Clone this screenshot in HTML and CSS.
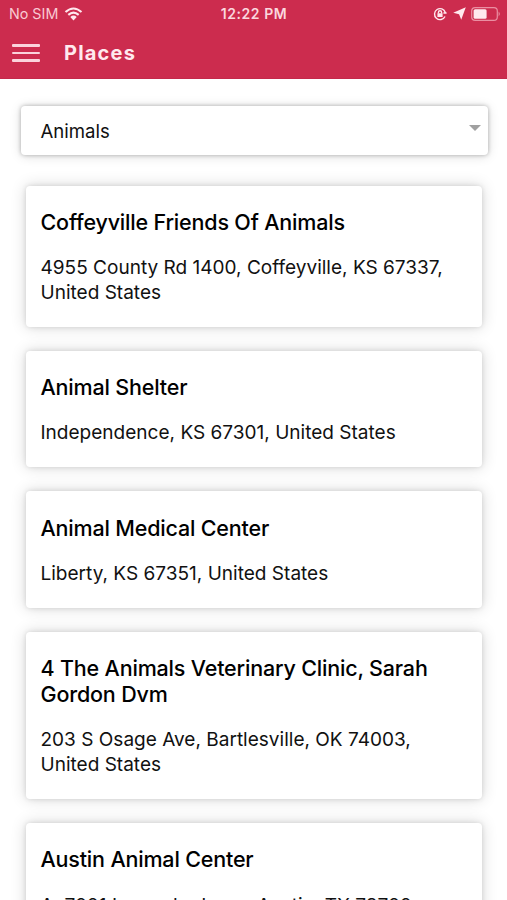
FILE: index.html
```html
<!DOCTYPE html>
<html lang="en">

<head>
    <meta charset="utf-8">
    <title>Places</title>
    <link rel="stylesheet" href="styles.css">
</head>

<body>
    <header class="header">
        <div class="status">
            <div class="status-left">
                <span class="carrier">No SIM</span>
                <svg class="wifi" width="19" height="14" viewBox="0 0 18 14">
                    <path d="M1 5 Q9 -2 17 5 M3.8 7.9 Q9 3.4 14.2 7.9" />
                    <path class="fill" d="M5.8 10 Q9 7.2 12.2 10 L9 13.4 Z" />
                </svg>
            </div>
            <span class="time">12:22 PM</span>
            <div class="status-right">
                <svg class="lock" width="14" height="14" viewBox="0 0 14 14">
                    <path d="M12.3 5.5 A5.5 5.5 0 1 0 12 9.5 M10.4 6 H13.6" />
                    <path d="M5.4 6.5 V5.4 a1.6 1.6 0 0 1 3.2 0 V6.5" />
                    <rect class="fill" x="4.4" y="6.2" width="5.2" height="3.8" rx=".5" />
                </svg>
                <svg class="arrow" width="13" height="13" viewBox="0 0 12 12">
                    <path class="fill" d="M11.8 .2 L7.6 11.8 L5.6 6.8 L.2 5.4 Z" />
                </svg>
                <svg class="battery" width="30" height="14" viewBox="0 0 30 14">
                    <rect class="shell" x=".7" y=".7" width="25.6" height="12.6" rx="3.4" />
                    <path class="tip" d="M27.6 4.6 Q30 7 27.6 9.4 Z" />
                    <rect class="fill" x="2.6" y="2.3" width="13" height="9.4" rx="1.5" />
                </svg>
            </div>
        </div>
        <div class="navbar">
            <div class="menu">
                <span></span>
                <span></span>
                <span></span>
            </div>
            <h1>Places</h1>
        </div>
    </header>

    <main class="content">
        <div class="select">
            <span>Animals</span>
            <i class="caret"></i>
        </div>

        <div class="list">
            <div class="card">
                <h2>Coffeyville Friends Of Animals</h2>
                <p>4955 County Rd 1400, Coffeyville, KS 67337, United States</p>
            </div>
            <div class="card">
                <h2>Animal Shelter</h2>
                <p>Independence, KS 67301, United States</p>
            </div>
            <div class="card">
                <h2>Animal Medical Center</h2>
                <p>Liberty, KS 67351, United States</p>
            </div>
            <div class="card">
                <h2>4 The Animals Veterinary Clinic, Sarah Gordon Dvm</h2>
                <p>203 S Osage Ave, Bartlesville, OK 74003, United States</p>
            </div>
            <div class="card">
                <h2>Austin Animal Center</h2>
                <p>A, 7201 Levander Loop, Austin, TX 78702, United States</p>
            </div>
        </div>
    </main>
</body>

</html>
```
FILE: styles.css
```css
* {
    box-sizing: border-box;
}

body {
    margin: 0;
    height: 900px;
    overflow: hidden;
    background: #fff;
    color: #111;
    font-family: Inter, "Liberation Sans", sans-serif;
}

h1, h2, p {
    margin: 0;
}

.header {
    height: 79px;
    background: #cc2c4e;
    color: #ffe9ee;
    border-bottom: 1px solid #c4294a;
}

.status {
    display: grid;
    grid-template-columns: 1fr auto 1fr;
    align-items: center;
    height: 27px;
    padding: 0 6px 0 9px;
    font-size: 14px;
}

.status-left,
.status-right {
    display: flex;
    align-items: center;
}

.status-left {
    gap: 6px;
}

.status-right {
    justify-content: flex-end;
}

.carrier {
    font-size: 14.3px;
    color: #f9c9d3;
}

.time {
    margin-right: 2px;
    font-weight: 600;
    letter-spacing: .55px;
    color: #fbd7de;
}

.status svg {
    fill: none;
    stroke: #ffe9ee;
    stroke-width: 1.4;
}

.status .wifi {
    stroke-width: 2.1;
}

.status .fill {
    fill: #ffe9ee;
    stroke: none;
}

.lock {
    margin-right: 6px;
}

.arrow {
    margin-right: 5px;
}

.status .shell {
    stroke: #ea8fa2;
    stroke-width: 1.2;
}

.status .tip {
    fill: #ea8fa2;
    stroke: none;
}

.navbar {
    display: flex;
    align-items: center;
    height: 51px;
    padding-left: 12px;
}

.menu {
    display: flex;
    flex-direction: column;
    gap: 5px;
    width: 28px;
    margin: 1px 24px 0 0;
}

.menu span {
    height: 2.4px;
    border-radius: 1px;
    background: #fbd3dc;
}

.navbar h1 {
    font-size: 20px;
    font-weight: 700;
    letter-spacing: 1.2px;
}

.content {
    padding: 26.5px 19px 0 20.5px;
}

.select {
    display: flex;
    align-items: center;
    justify-content: space-between;
    height: 49px;
    padding: 1px 7px 0 20px;
    border-radius: 4px;
    font-size: 18.6px;
    box-shadow: 0 0 4px rgba(0, 0, 0, .28), 0 1px 12px rgba(0, 0, 0, .14);
}

.caret {
    margin-top: -5px;
    border: 6px solid transparent;
    border-top-color: #a0a0a0;
    border-bottom: 0;
}

.list {
    display: flex;
    flex-direction: column;
    gap: 24.3px;
    padding: 31.3px 6px 0 5px;
}

.card {
    padding: 24.3px 15px 21.2px;
    border-radius: 4px;
    background: #fff;
    box-shadow: 0 0 5px rgba(0, 0, 0, .12), 0 0 16px rgba(0, 0, 0, .16);
}

.card h2 {
    margin-bottom: 20.5px;
    font-size: 21.5px;
    font-weight: 500;
    line-height: 25.8px;
    letter-spacing: -.18px;
    color: #000;
}

.card p {
    font-size: 19.05px;
    line-height: 24.5px;
}
```
